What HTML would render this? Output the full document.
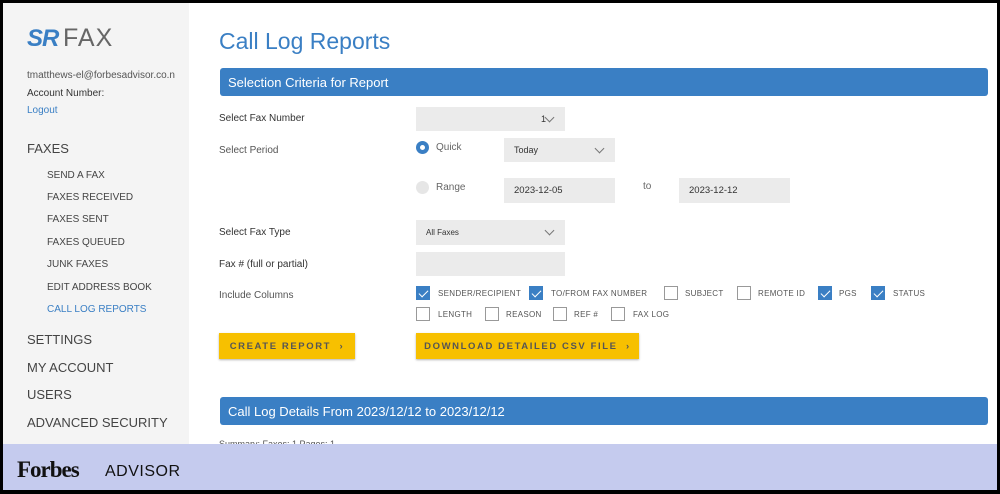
<!DOCTYPE html>
<html><head><style>
*{margin:0;padding:0;box-sizing:border-box}
body{width:1000px;height:494px;background:#000;font-family:"Liberation Sans",sans-serif;position:relative;overflow:hidden}
.page{position:absolute;left:3px;top:3px;width:994px;height:487px;background:#fff;overflow:hidden}
.side{position:absolute;left:0;top:0;width:186px;height:487px;background:#f4f4f4}
.a{position:absolute;white-space:nowrap}
.nav{font-size:13px;color:#444}
.sub{font-size:10px;color:#444}
.lbl{font-size:10px;color:#333}
.bar{position:absolute;left:217px;width:768px;height:28px;background:#3a7fc4;border-radius:3px;color:#fff;font-size:13px;padding:7px 8px}
.box{position:absolute;background:#ebebeb;font-size:9px;color:#333;padding-left:10px;display:flex;align-items:center}
.chev{position:absolute;right:12px;top:7px;width:7px;height:7px;border-right:1.3px solid #777;border-bottom:1.3px solid #777;transform:rotate(45deg)}
.cb{position:absolute;width:14px;height:14px;border:1px solid #999;background:#fff}
.cb.on{background:#3a7fc4;border-color:#3a7fc4}
.cb.on:after{content:"";position:absolute;left:4px;top:1px;width:4px;height:8px;border-right:1.5px solid #fff;border-bottom:1.5px solid #fff;transform:rotate(45deg)}
.cl{position:absolute;font-size:8px;letter-spacing:.3px;color:#555}
.btn{position:absolute;background:#f7c000;height:26px;font-size:9.5px;letter-spacing:1.6px;color:#555;font-weight:bold;display:flex;align-items:center;justify-content:center;box-shadow:0 1px 2px rgba(0,0,0,.3)}
</style></head><body>
<div class="page">
<div class="side">
<div class="a" style="left:24px;top:22px;font-size:24px;font-weight:900;color:#3a7fc4;letter-spacing:-1px;font-style:italic">SR</div>
<div class="a" style="left:60px;top:21px;font-size:25px;color:#666;letter-spacing:1px">FAX</div>
<div class="a" style="left:24px;top:67px;font-size:10px;color:#555">tmatthews-el@forbesadvisor.co.n</div>
<div class="a" style="left:24px;top:85px;font-size:10px;color:#333">Account Number:</div>
<div class="a" style="left:24px;top:102px;font-size:10px;color:#3a7fc4">Logout</div>
<div class="a nav" style="left:24px;top:138px">FAXES</div>
<div class="a sub" style="left:44px;top:167px">SEND A FAX</div>
<div class="a sub" style="left:44px;top:189px">FAXES RECEIVED</div>
<div class="a sub" style="left:44px;top:211px">FAXES SENT</div>
<div class="a sub" style="left:44px;top:234px">FAXES QUEUED</div>
<div class="a sub" style="left:44px;top:256px">JUNK FAXES</div>
<div class="a sub" style="left:44px;top:279px">EDIT ADDRESS BOOK</div>
<div class="a sub" style="left:44px;top:301px;color:#3a7fc4">CALL LOG REPORTS</div>
<div class="a nav" style="left:24px;top:329px">SETTINGS</div>
<div class="a nav" style="left:24px;top:357px">MY ACCOUNT</div>
<div class="a nav" style="left:24px;top:384px">USERS</div>
<div class="a nav" style="left:24px;top:412px">ADVANCED SECURITY</div>
</div>
<div class="a" style="left:216px;top:25px;font-size:23px;color:#3a7fc4">Call Log Reports</div>
<div class="bar" style="top:65px">Selection Criteria for Report</div>
<div class="a lbl" style="left:216px;top:110px">Select Fax Number</div>
<div class="box" style="left:413px;top:104px;width:149px;height:24px"><span style="margin-left:115px">1</span><div class="chev"></div></div>
<div class="a lbl" style="left:216px;top:142px;color:#555">Select Period</div>
<div class="a" style="left:413px;top:138px;width:13px;height:13px;border-radius:50%;border:4px solid #3a7fc4;background:#fff"></div>
<div class="a" style="left:433px;top:139px;font-size:10px;color:#666">Quick</div>
<div class="box" style="left:501px;top:135px;width:111px;height:24px">Today<div class="chev"></div></div>
<div class="a" style="left:413px;top:178px;width:13px;height:13px;border-radius:50%;background:#e6e6e6"></div>
<div class="a" style="left:433px;top:179px;font-size:10px;color:#666">Range</div>
<div class="box" style="left:501px;top:175px;width:111px;height:25px;font-size:9.5px">2023-12-05</div>
<div class="a" style="left:640px;top:178px;font-size:10px;color:#666">to</div>
<div class="box" style="left:676px;top:175px;width:111px;height:25px;font-size:9.5px">2023-12-12</div>
<div class="a lbl" style="left:216px;top:224px">Select Fax Type</div>
<div class="box" style="left:413px;top:217px;width:149px;height:25px;font-size:8px">All Faxes<div class="chev"></div></div>
<div class="a lbl" style="left:216px;top:256px">Fax # (full or partial)</div>
<div class="box" style="left:413px;top:249px;width:149px;height:24px"></div>
<div class="a lbl" style="left:216px;top:287px;color:#555">Include Columns</div>
<div class="cb on" style="left:413px;top:283px"></div><div class="cl" style="left:435px;top:286px">SENDER/RECIPIENT</div>
<div class="cb on" style="left:526px;top:283px"></div><div class="cl" style="left:548px;top:286px">TO/FROM FAX NUMBER</div>
<div class="cb" style="left:661px;top:283px"></div><div class="cl" style="left:682px;top:286px">SUBJECT</div>
<div class="cb" style="left:734px;top:283px"></div><div class="cl" style="left:755px;top:286px">REMOTE ID</div>
<div class="cb on" style="left:815px;top:283px"></div><div class="cl" style="left:836px;top:286px">PGS</div>
<div class="cb on" style="left:868px;top:283px"></div><div class="cl" style="left:890px;top:286px">STATUS</div>
<div class="cb" style="left:413px;top:304px"></div><div class="cl" style="left:435px;top:307px">LENGTH</div>
<div class="cb" style="left:482px;top:304px"></div><div class="cl" style="left:503px;top:307px">REASON</div>
<div class="cb" style="left:550px;top:304px"></div><div class="cl" style="left:571px;top:307px">REF #</div>
<div class="cb" style="left:608px;top:304px"></div><div class="cl" style="left:630px;top:307px">FAX LOG</div>
<div class="btn" style="left:216px;top:330px;width:136px">CREATE REPORT &nbsp;›</div>
<div class="btn" style="left:413px;top:330px;width:223px">DOWNLOAD DETAILED CSV FILE &nbsp;›</div>
<div class="bar" style="top:394px">Call Log Details From 2023/12/12 to 2023/12/12</div>
<div class="a" style="left:216px;top:436px;font-size:9px;color:#555">Summary: Faxes: 1 Pages: 1</div>
<div class="a" style="left:0;top:441px;width:994px;height:46px;background:#c5cbee"></div>
<div class="a" style="left:14px;top:454px;font-family:'Liberation Serif',serif;font-weight:bold;font-size:23px;color:#111;letter-spacing:-1px">Forbes</div>
<div class="a" style="left:102px;top:460px;font-size:16px;color:#111;letter-spacing:.5px">ADVISOR</div>
</div>
</body></html>
